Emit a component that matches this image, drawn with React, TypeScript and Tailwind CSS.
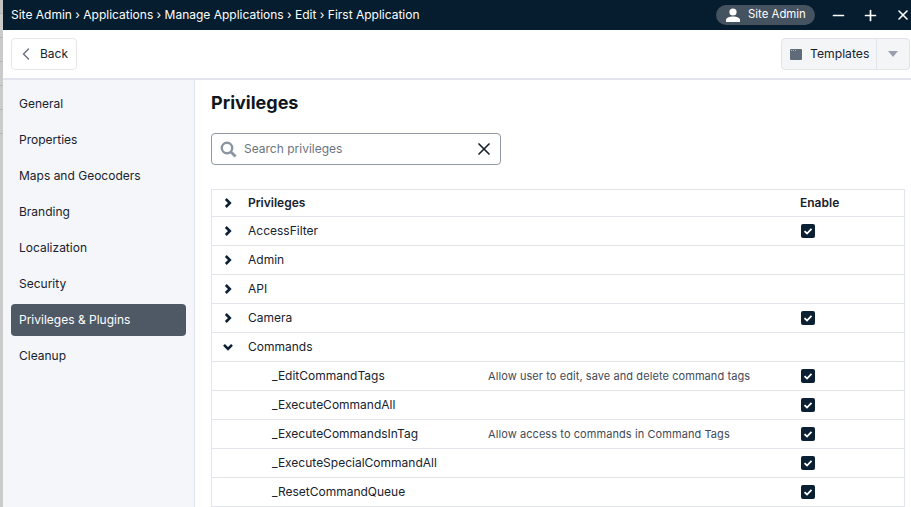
import { Minus, Plus, X, ChevronLeft } from "lucide-react";

const font = "font-['Inter','Liberation_Sans',sans-serif]";

function Chevron({ down }: { down?: boolean }) {
  return (
    <svg width="10" height="10" viewBox="0 0 10 10" className="shrink-0">
      <path
        d={down ? "M1 2.8 L5 6.8 L9 2.8" : "M2.8 1 L6.8 5 L2.8 9"}
        fill="none"
        stroke="#0b2133"
        strokeWidth="2.6"
      />
    </svg>
  );
}

function Check() {
  return (
    <span className="flex h-[14px] w-[14px] items-center justify-center rounded-[2px] bg-[#0b2133]">
      <svg width="10" height="10" viewBox="0 0 10 10">
        <path d="M1.5 5.2 L4 7.5 L8.5 2.8" fill="none" stroke="#fff" strokeWidth="1.8" />
      </svg>
    </span>
  );
}

function GroupRow({ name, checked, down, header }: { name: string; checked?: boolean; down?: boolean; header?: boolean }) {
  return (
    <div className={`flex items-center border-b border-[#e2e5ec] ${header ? "h-[27px] font-semibold" : "h-[29px]"}`}>
      <div className="flex w-[36px] pl-[11px]">
        <Chevron down={down} />
      </div>
      <span className="flex-1">{name}</span>
      <div className="flex w-[104px]">
        {header ? <span>Enable</span> : checked ? <span className="pl-[1px]"><Check /></span> : null}
      </div>
    </div>
  );
}

function ChildRow({ name, desc }: { name: string; desc?: string }) {
  return (
    <div className="flex h-[29px] shrink-0 items-center border-b border-[#e2e5ec]">
      <span className="w-[276px] pl-[60px]">{name}</span>
      <span className="flex-1 text-[11px] tracking-[0.08px] text-[#3f4a57]">{desc}</span>
      <div className="flex w-[104px] pl-[1px]">
        <Check />
      </div>
    </div>
  );
}

const nav = ["General", "Properties", "Maps and Geocoders", "Branding", "Localization", "Security", "Privileges & Plugins", "Cleanup"];
const marks = [14, 24, 24, 24, 24, 24];

export default function App() {
  return (
    <div className={`${font} flex h-[507px] w-[911px] overflow-hidden bg-white text-[12px] text-[#17222e]`}>
      <div className="flex w-[3px] shrink-0 flex-col bg-[#cbcbcb]">
        {marks.map((h, i) => (
          <div key={i} className={`shrink-0 border-b border-[#b4b4b4] ${i === 0 ? "h-[14px] bg-[#c2c2c2]" : "h-[24px]"}`} />
        ))}
      </div>

      <div className="flex min-w-0 flex-1 flex-col">
        <header className="flex h-[30px] shrink-0 items-center bg-[#051d2e] pl-[8px] text-white">
          <span className="flex-1">Site Admin › Applications › Manage Applications › Edit › First Application</span>
          <div className="mr-[15px] flex h-[20px] w-[99px] items-center rounded-full bg-[#45525f] pl-[10px] text-[11.4px]">
            <svg width="14" height="14" viewBox="0 0 14 14" className="mr-[8px] shrink-0">
              <circle cx="7" cy="4" r="3.6" fill="#fff" />
              <path d="M0 14 V12 C0 9.8 3.2 8.4 7 8.4 S14 9.8 14 12 V14 Z" fill="#fff" />
            </svg>
            <span>Site Admin</span>
          </div>
          <Minus size={17} strokeWidth={2.4} className="mr-[15px]" />
          <Plus size={17} strokeWidth={2.4} className="mr-[16px]" />
          <X size={16} strokeWidth={2.4} />
        </header>

        <div className="flex h-[50px] shrink-0 items-center justify-between border-b-2 border-[#e2e5ef] pl-[8px] pr-[1px]">
          <button className="flex h-[32px] w-[66px] items-center rounded-[4px] border border-[#e4e6ea] bg-white pl-[4px]">
            <ChevronLeft size={20} strokeWidth={1.8} className="mr-[4px] text-[#6b7480]" />
            <span>Back</span>
          </button>
          <div className="flex h-[32px] w-[129px] items-center rounded-[4px] border border-[#e2e4e9] bg-[#f4f5f7]">
            <svg width="12" height="11" viewBox="0 0 12 11" className="ml-[8px] mr-[8px] shrink-0">
              <rect width="12" height="11" rx="1" fill="#5f6b78" />
              <path d="M1 1.5 H2 M3 1.5 H4 M5 1.5 H6" stroke="#aab1ba" strokeWidth="1" />
            </svg>
            <span className="flex-1 text-[12.2px]">Templates</span>
            <div className="flex h-full w-[33px] items-center justify-center border-l border-[#e2e4e9]">
              <svg width="10" height="6" viewBox="0 0 10 6">
                <path d="M0 0 H10 L5 6 Z" fill="#9aa1ad" />
              </svg>
            </div>
          </div>
        </div>

        <div className="flex min-h-0 flex-1">
          <aside className="flex w-[192px] shrink-0 flex-col gap-[4px] border-r border-[#e2e5ef] bg-[#f5f6f9] pl-[8px] pr-[8px] pt-[8px]">
            {nav.map((n, i) => (
              <div
                key={n}
                className={`flex h-[32px] shrink-0 items-center rounded-[4px] pl-[8px] ${i === 6 ? "bg-[#4f5966] text-white" : ""}`}
              >
                {n}
              </div>
            ))}
          </aside>

          <main className="min-w-0 flex-1 overflow-hidden pl-[16px] pr-[6px]">
            <h1 className="mt-[11px] text-[18px] font-bold leading-[24px] text-[#10161e]">Privileges</h1>
            <div className="mt-[18px] flex h-[32px] w-[290px] items-center rounded-[4px] border border-[#8f98a3] pl-[8px] pr-[6px]">
              <svg width="17" height="17" viewBox="0 0 17 17" className="mr-[7px] shrink-0">
                <circle cx="7" cy="7" r="5.2" fill="none" stroke="#8b95a1" strokeWidth="2.4" />
                <path d="M11 11 L15.5 15.5" stroke="#8b95a1" strokeWidth="2.8" />
              </svg>
              <span className="flex-1 text-[#6b7480]">Search privileges</span>
              <X size={20} strokeWidth={2} className="text-[#17222e]" />
            </div>
            <div className="mt-[24px] flex flex-col border-x border-t border-[#e2e5ec]">
              <GroupRow name="Privileges" header />
              <GroupRow name="AccessFilter" checked />
              <GroupRow name="Admin" />
              <GroupRow name="API" />
              <GroupRow name="Camera" checked />
              <GroupRow name="Commands" down />
              <ChildRow name="_EditCommandTags" desc="Allow user to edit, save and delete command tags" />
              <ChildRow name="_ExecuteCommandAll" />
              <ChildRow name="_ExecuteCommandsInTag" desc="Allow access to commands in Command Tags" />
              <ChildRow name="_ExecuteSpecialCommandAll" />
              <ChildRow name="_ResetCommandQueue" />
            </div>
          </main>
        </div>
      </div>
    </div>
  );
}
